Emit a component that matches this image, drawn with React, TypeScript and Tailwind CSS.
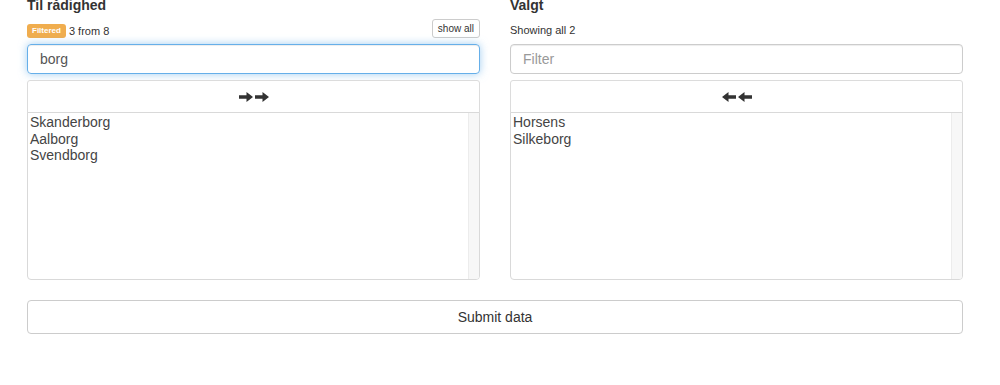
import React from "react";

const font = { fontFamily: '"Liberation Sans", Arial, sans-serif' };

function Arrow({ dir }: { dir: "right" | "left" }) {
  return (
    <svg width="14" height="10" viewBox="0 0 14 10" className="block">
      {dir === "right" ? (
        <path d="M0 3.2H7.5V0L14 5L7.5 10V6.8H0Z" fill="#333" />
      ) : (
        <path d="M14 3.2H6.5V0L0 5L6.5 10V6.8H14Z" fill="#333" />
      )}
    </svg>
  );
}

function ListBox({ items }: { items: string[] }) {
  return (
    <div className="flex h-[168px] border border-[#d9d9d9] rounded-b-[4px] bg-white overflow-hidden">
      <div className="flex-1 pt-[1px] pl-[2px] text-[14px] leading-[16.5px] text-[#444]">
        {items.map((it) => (
          <div key={it}>{it}</div>
        ))}
      </div>
      <div className="w-[11px] bg-[#f7f7f7] border-l border-[#ececec]" />
    </div>
  );
}

export default function App() {
  return (
    <div className="w-[1000px] h-[385px] bg-white text-[#333] overflow-hidden" style={font}>
      <div className="ml-[27px] w-[936px] grid grid-cols-2 gap-[30px] mt-[-3px]">
        {/* Left column */}
        <div className="flex flex-col">
          <div className="text-[14px] leading-[16px] font-bold">Til rådighed</div>
          <div className="flex items-end justify-between h-[19px] mt-[6px]">
            <div className="flex items-center">
              <span className="bg-[#f0ad4e] text-white text-[8px] font-bold leading-[14px] h-[14px] px-[5px] rounded-[3px]">
                Filtered
              </span>
              <span className="ml-[3px] text-[11px] leading-[14px]">3 from 8</span>
            </div>
            <button className="h-[19px] px-[5px] border border-[#ccc] rounded-[3px] bg-white text-[10px] leading-[17px] text-[#333]">
              show all
            </button>
          </div>
          <div className="mt-[6px] h-[30px] border border-[#66afe9] rounded-[4px] pl-[12px] flex items-center text-[14px] text-[#555] shadow-[inset_0_1px_1px_rgba(0,0,0,0.075),0_0_8px_rgba(102,175,233,0.6)]">
            borg
          </div>
          <div className="mt-[6px] h-[33px] border border-[#dcdcdc] rounded-t-[3px] bg-white flex items-center justify-center gap-[2px]">
            <Arrow dir="right" />
            <Arrow dir="right" />
          </div>
          <div className="mt-[-1px]">
            <ListBox items={["Skanderborg", "Aalborg", "Svendborg"]} />
          </div>
        </div>
        {/* Right column */}
        <div className="flex flex-col">
          <div className="text-[14px] leading-[16px] font-bold">Valgt</div>
          <div className="flex items-end h-[19px] mt-[6px]">
            <span className="text-[11px] leading-[14px] mb-[1px]">Showing all 2</span>
          </div>
          <div className="mt-[6px] h-[30px] border border-[#ccc] rounded-[4px] pl-[12px] flex items-center text-[14px] text-[#999] shadow-[inset_0_1px_1px_rgba(0,0,0,0.075)]">
            Filter
          </div>
          <div className="mt-[6px] h-[33px] border border-[#dcdcdc] rounded-t-[3px] bg-white flex items-center justify-center gap-[2px]">
            <Arrow dir="left" />
            <Arrow dir="left" />
          </div>
          <div className="mt-[-1px]">
            <ListBox items={["Horsens", "Silkeborg"]} />
          </div>
        </div>
      </div>
      <div className="ml-[27px] w-[936px] mt-[20px]">
        <button className="w-full h-[34px] border border-[#ccc] rounded-[4px] bg-white text-[14px] text-[#333] flex items-center justify-center">
          Submit data
        </button>
      </div>
    </div>
  );
}
